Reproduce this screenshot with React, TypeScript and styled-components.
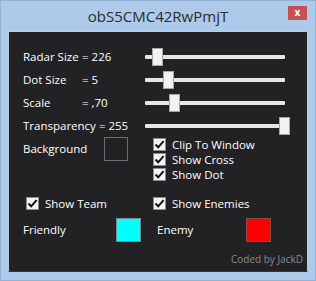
import styled, { createGlobalStyle } from 'styled-components';

const GlobalStyle = createGlobalStyle`
  html, body {
    margin: 0;
    padding: 0;
    background: #abc9e8;
  }
`;

const Window = styled.div`
  box-sizing: border-box;
  width: 316px;
  height: 281px;
  background: #adcaea;
  border: 1px solid #93b2d3;
  padding: 0 7px 8px 7px;
  display: flex;
  flex-direction: column;
  font-family: 'Open Sans', 'Noto Sans', sans-serif;
`;

const TitleBar = styled.div`
  height: 30px;
  display: grid;
  grid-template-columns: 1fr auto 1fr;
  align-items: start;
`;

const Title = styled.div`
  grid-column: 2;
  margin-top: 5px;
  font-size: 15px;
  line-height: 20px;
  color: #2b2b2b;
`;

const CloseButton = styled.div`
  grid-column: 3;
  justify-self: end;
  margin-top: 5px;
  margin-right: 1px;
  width: 19px;
  height: 14px;
  background: #c75050;
  color: #fff;
  font-size: 10px;
  font-weight: 700;
  line-height: 13px;
  text-align: center;
`;

const Client = styled.div`
  flex: 1;
  background: #222225;
  border: 1px solid #b9cfe6;
  border-bottom-color: #1f3a4c;
  padding: 13px 0 0 14px;
  display: flex;
  flex-direction: column;
  color: #ffffff;
  font-size: 11.5px;
`;

const SliderRow = styled.div`
  height: 23px;
  display: grid;
  grid-template-columns: 122px 140px;
  align-items: center;
`;

const SliderLabel = styled.div`
  display: flex;
  line-height: 16px;
  white-space: nowrap;
`;

const Name = styled.span<{ $width?: number }>`
  ${(p) => (p.$width ? `width: ${p.$width}px;` : 'margin-right: 3px;')}
`;

const Label = styled.span<{ $shift?: number }>`
  white-space: nowrap;
  line-height: 16px;
  padding-left: ${(p) => p.$shift ?? 0}px;
`;

const Track = styled.div`
  position: relative;
  height: 4px;
  background: #e6e6e8;
  border-radius: 1px;
`;

const Thumb = styled.div`
  position: absolute;
  top: -7px;
  width: 9px;
  height: 16px;
  background: #f2f2f2;
  border: 1px solid #a6a6a6;
`;

const Options = styled.div`
  display: grid;
  grid-template-columns: 130px 1fr;
`;

const Cell = styled.div<{ $indent?: number }>`
  display: flex;
  flex-direction: column;
  padding-left: ${(p) => p.$indent ?? 0}px;
`;

const Field = styled.div<{ $labelWidth: number }>`
  display: grid;
  grid-template-columns: ${(p) => p.$labelWidth}px auto;
  align-items: center;
`;

const Swatch = styled.div<{ $color: string; $w: number; $h: number; $border: string }>`
  box-sizing: border-box;
  width: ${(p) => p.$w}px;
  height: ${(p) => p.$h}px;
  background: ${(p) => p.$color};
  border: 1px solid ${(p) => p.$border};
`;

const CheckRow = styled.div`
  height: 15px;
  display: flex;
  align-items: center;
  gap: 6px;
`;

const Box = styled.div`
  box-sizing: border-box;
  width: 13px;
  height: 13px;
  background: #f4f4f4;
  border: 1px solid #8c8c8c;
  display: flex;
  align-items: center;
  justify-content: center;
`;

const CheckText = styled.span`
  line-height: 15px;
`;

const ToggleRow = styled.div`
  display: grid;
  grid-template-columns: 130px 1fr;
  margin-top: 14px;
`;

const ColorRow = styled.div`
  display: grid;
  grid-template-columns: 130px 1fr;
  margin-top: 7px;
`;

const Credit = styled.div`
  align-self: flex-end;
  margin-top: 11px;
  margin-right: 4px;
  font-size: 10px;
  line-height: 13px;
  color: #8a8a8e;
`;

const sliders = [
  { name: 'Radar Size', value: '= 226', at: 0.052, width: 59 },
  { name: 'Dot Size', value: '= 5', at: 0.134, width: 59 },
  { name: 'Scale', value: '= ,70', at: 0.179, width: 59 },
  { name: 'Transparency', value: '= 255', at: 1 },
];

const Check = ({ label }: { label: string }) => (
  <CheckRow>
    <Box>
      <svg width="11" height="11" viewBox="0 0 11 11">
        <polyline points="1.5,5.5 4.2,8.3 9.6,2.2" fill="none" stroke="#111" strokeWidth="2" />
      </svg>
    </Box>
    <CheckText>{label}</CheckText>
  </CheckRow>
);

export default function App() {
  return (
    <>
      <GlobalStyle />
      <Window>
        <TitleBar>
          <Title>obS5CMC42RwPmjT</Title>
          <CloseButton>x</CloseButton>
        </TitleBar>
        <Client>
          {sliders.map((s) => (
            <SliderRow key={s.name}>
              <SliderLabel>
                <Name $width={s.width}>{s.name}</Name>
                <span>{s.value}</span>
              </SliderLabel>
              <Track>
                <Thumb style={{ left: `${s.at * 134}px` }} />
              </Track>
            </SliderRow>
          ))}
          <Options>
            <Cell>
              <Field $labelWidth={81}>
                <Label>Background</Label>
                <Swatch $color="transparent" $w={24} $h={24} $border="#6e6e72" />
              </Field>
            </Cell>
            <Cell>
              <Check label="Clip To Window" />
              <Check label="Show Cross" />
              <Check label="Show Dot" />
            </Cell>
          </Options>
          <ToggleRow>
            <Cell $indent={3}>
              <Check label="Show Team" />
            </Cell>
            <Cell>
              <Check label="Show Enemies" />
            </Cell>
          </ToggleRow>
          <ColorRow>
            <Field $labelWidth={93}>
              <Label>Friendly</Label>
              <Swatch $color="#00ffff" $w={25} $h={24} $border="#7f8a8c" />
            </Field>
            <Field $labelWidth={93}>
              <Label $shift={4}>Enemy</Label>
              <Swatch $color="#ff0000" $w={25} $h={24} $border="#8a4a4a" />
            </Field>
          </ColorRow>
          <Credit>Coded by JackD</Credit>
        </Client>
      </Window>
    </>
  );
}
